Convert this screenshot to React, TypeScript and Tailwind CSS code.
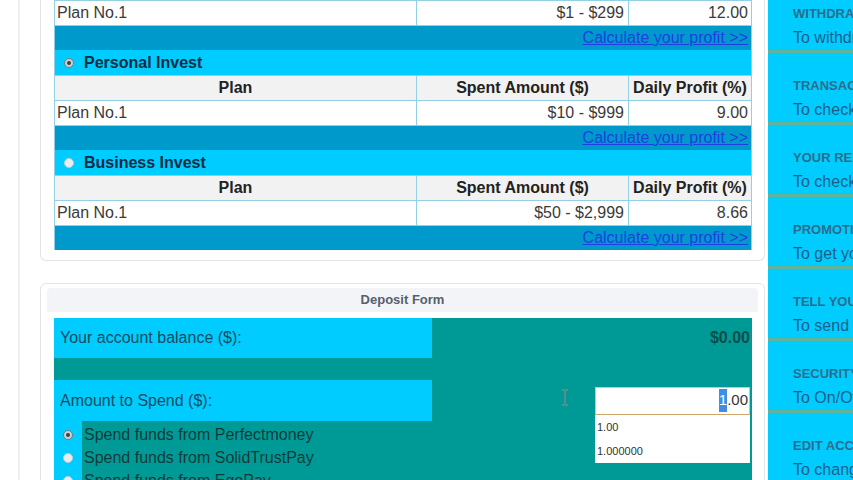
const FONT = { fontFamily: '"Liberation Sans", Arial, sans-serif' };

function Radio({ checked }: { checked?: boolean }) {
  return (
    <span
      className={`flex h-[10px] w-[10px] shrink-0 items-center justify-center rounded-full border ${
        checked ? 'border-[#6f7c84] bg-[#c9d1d5]' : 'border-[#c4ccd0] bg-[#e9edef]'
      }`}
    >
      {checked && <span className="h-[4px] w-[4px] rounded-full bg-[#34424a]" />}
    </span>
  );
}

function DataRow({ plan, amount, profit }: { plan: string; amount: string; profit: string }) {
  return (
    <div className="flex h-[25px] border-t border-[#93d0e6] bg-white text-[16px] text-[#3a3a3a]">
      <div className="flex w-[361px] items-center px-[2px]">{plan}</div>
      <div className="flex w-[212px] items-center justify-end border-l border-[#93d0e6] px-[4px]">{amount}</div>
      <div className="flex flex-1 items-center justify-end border-l border-[#93d0e6] px-[3px]">{profit}</div>
    </div>
  );
}

function HeaderRow() {
  return (
    <div className="flex h-[25px] border-t border-[#93d0e6] bg-[#f2f2f2] text-[16px] font-bold text-[#222]">
      <div className="flex w-[361px] items-center justify-center">Plan</div>
      <div className="flex w-[212px] items-center justify-center border-l border-[#93d0e6]">Spent Amount ($)</div>
      <div className="flex flex-1 items-center justify-center border-l border-[#93d0e6]">Daily Profit (%)</div>
    </div>
  );
}

function CalcBar() {
  return (
    <div className="flex h-[25px] items-center justify-end border-t border-[#93d0e6] bg-[#0099cc] px-[3px] text-[16px]">
      <a href="#" className="text-[#1f3fe0] underline">
        Calculate your profit &gt;&gt;
      </a>
    </div>
  );
}

function TitleRow({ label, checked }: { label: string; checked?: boolean }) {
  return (
    <div className="flex h-[25px] items-center gap-[10px] bg-[#00ccff] pl-[9px] text-[16px] font-bold text-[#0c2b44]">
      <Radio checked={checked} />
      {label}
    </div>
  );
}

const menu = [
  ['WITHDRAW', 'To withdraw your funds'],
  ['TRANSACTIONS', 'To check your transactions'],
  ['YOUR REFERRALS', 'To check your referrals'],
  ['PROMOTIONAL TOOLS', 'To get your banners'],
  ['TELL YOUR FRIENDS', 'To send invitations'],
  ['SECURITY', 'To On/Off security'],
  ['EDIT ACCOUNT', 'To change your info'],
];

export default function App() {
  return (
    <div className="flex h-[480px] w-[853px] overflow-hidden bg-white" style={FONT}>
      <div className="w-[768px] shrink-0 pl-[18px]">
        <div className="h-full border-l-2 border-[#f0f0f0] pl-[20px]">
          {/* plans card */}
          <div className="w-[725px] rounded-b-md border border-t-0 border-[#e4e4e4] pb-[10px]">
            <div className="ml-[13px] w-[698px] border-x border-[#93d0e6]">
              <DataRow plan="Plan No.1" amount="$1 - $299" profit="12.00" />
              <CalcBar />
              <TitleRow label="Personal Invest" checked />
              <HeaderRow />
              <DataRow plan="Plan No.1" amount="$10 - $999" profit="9.00" />
              <CalcBar />
              <TitleRow label="Business Invest" />
              <HeaderRow />
              <DataRow plan="Plan No.1" amount="$50 - $2,999" profit="8.66" />
              <CalcBar />
            </div>
          </div>

          {/* deposit form */}
          <div className="mt-[22px] w-[725px] rounded-md border border-[#e4e4e4] pt-[4px] pb-[10px]">
            <div className="mx-[6px] flex h-[24px] items-center justify-center rounded-t-sm bg-[#f3f4f7] text-[13px] font-bold text-[#55606a]">
              Deposit Form
            </div>
            <div className="mt-[6px] ml-[13px] w-[698px] bg-[#009a96] text-[16px]">
              <div className="flex h-[40px]">
                <div className="flex w-[378px] items-center bg-[#00ccff] px-[6px] text-[#174a60]">
                  Your account balance ($):
                </div>
                <div className="flex flex-1 items-center justify-end pr-[2px] font-bold text-[#0a4e4b]">$0.00</div>
              </div>
              <div className="h-[22px]" />
              <div className="flex h-[41px]">
                <div className="flex w-[378px] items-center bg-[#00ccff] px-[6px] text-[#174a60]">
                  Amount to Spend ($):
                </div>
                <div className="relative flex flex-1 items-center justify-end pr-[2px]">
                  <svg className="absolute left-[128px] top-[9px]" width="10" height="17" viewBox="0 0 10 17">
                    <path d="M2 1h2.5M5.5 1H8M5 1.5v14M2 16h2.5M5.5 16H8" stroke="#7c8c8c" strokeWidth="1.3" fill="none" />
                  </svg>
                  <div className="flex h-[28px] w-[155px] items-center justify-end border border-[#dcc58e] border-b-[#d2a56a] bg-white pr-[1px] text-[15px] text-[#333]">
                    <span className="bg-[#3d8ee8] text-white">1</span>.00
                  </div>
                  <div className="absolute left-[163px] top-[35px] z-10 w-[155px] bg-white text-[11px] text-[#333]">
                    <div className="flex h-[24px] items-center px-[2px]">1.00</div>
                    <div className="flex h-[24px] items-center px-[2px]">1.000000</div>
                  </div>
                </div>
              </div>
              <div className="flex pb-[6px]">
                <div className="flex w-[28px] flex-col items-center bg-[#00ccff] pt-[2px]">
                  {[true, false, false].map((c, i) => (
                    <div key={i} className="flex h-[23px] items-center">
                      <Radio checked={c} />
                    </div>
                  ))}
                </div>
                <div className="flex flex-1 flex-col pt-[2px] pl-[2px] text-[#123a3a]">
                  <div className="flex h-[23px] items-center">Spend funds from Perfectmoney</div>
                  <div className="flex h-[23px] items-center">Spend funds from SolidTrustPay</div>
                  <div className="flex h-[23px] items-center">Spend funds from EgoPay</div>
                </div>
              </div>
            </div>
          </div>
        </div>
      </div>

      {/* right menu */}
      <div className="flex-1 overflow-hidden bg-[#00ccff]">
        <div className="-mt-[22px]">
          {menu.map(([title, sub]) => (
            <div key={title} className="h-[72px] whitespace-nowrap border-t-[3px] border-[#5fb49c] pl-[25px]">
              <div className="pt-[26px] text-[13px] font-bold leading-[14px] text-[#2b6c8c]">{title}</div>
              <div className="pt-[8px] text-[16px] leading-[18px] text-[#1c5e8a]">{sub}</div>
            </div>
          ))}
        </div>
      </div>
    </div>
  );
}
